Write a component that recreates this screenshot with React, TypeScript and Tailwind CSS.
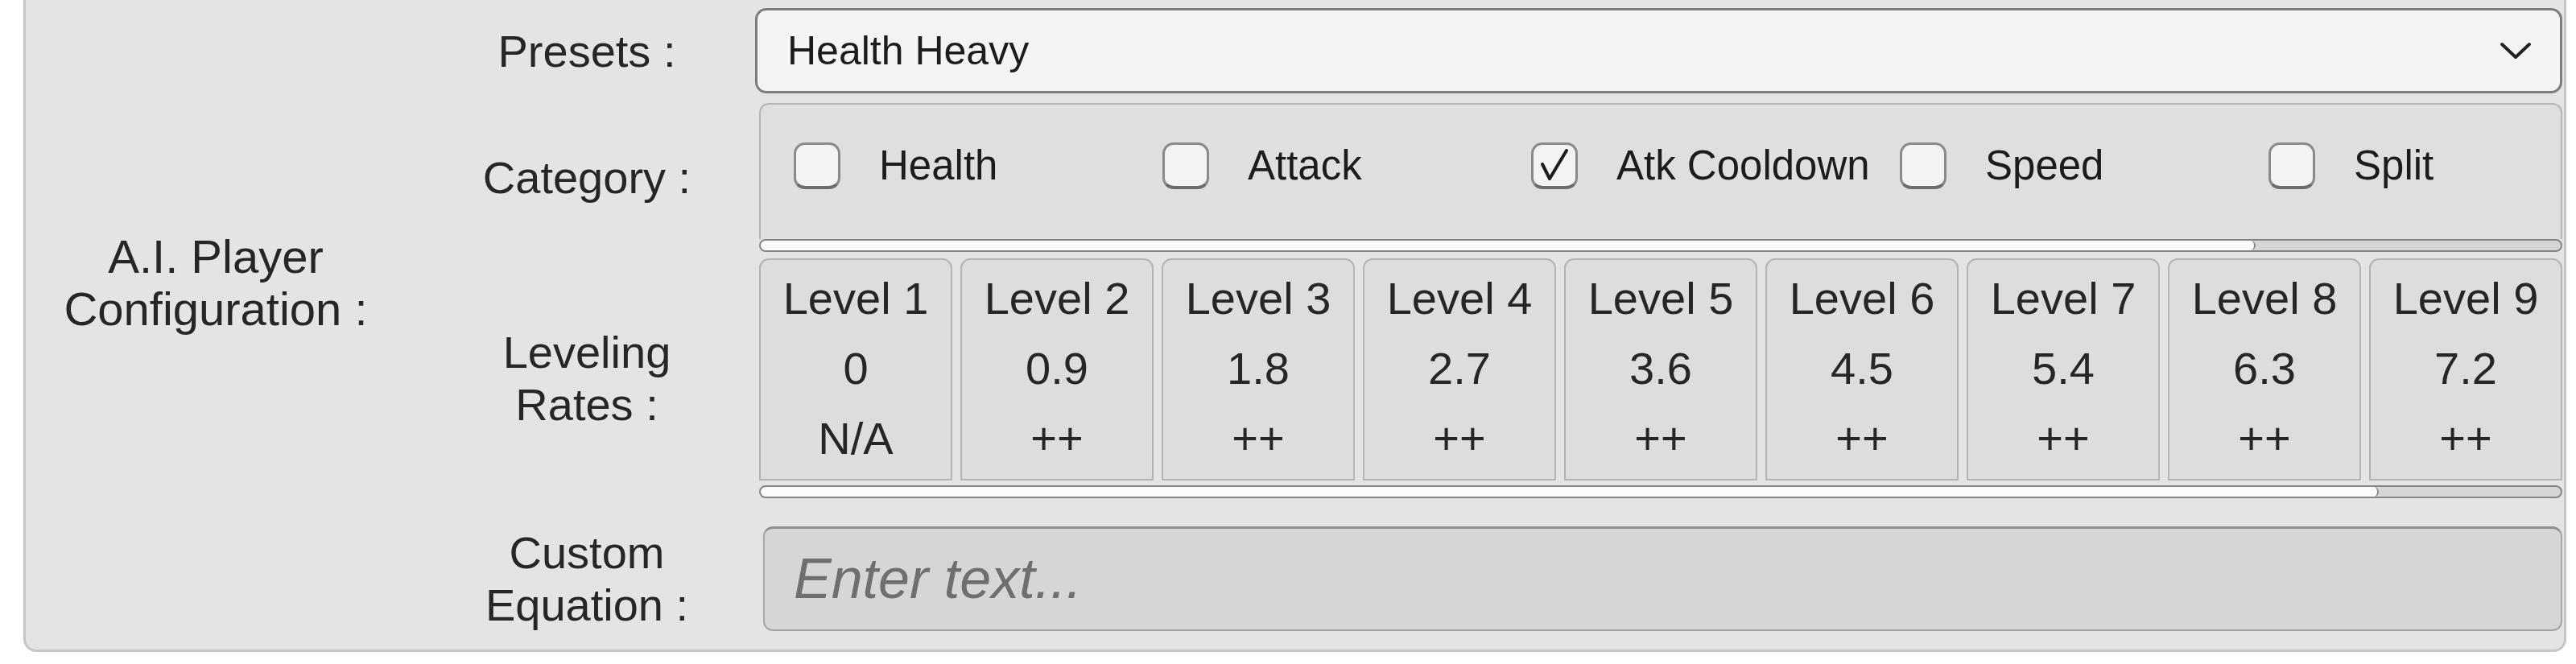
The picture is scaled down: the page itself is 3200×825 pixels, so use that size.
const categories = [
  { name: 'Health', checked: false },
  { name: 'Attack', checked: false },
  { name: 'Atk Cooldown', checked: true },
  { name: 'Speed', checked: false },
  { name: 'Split', checked: false },
];

const levels = [
  { name: 'Level 1', rate: '0', mark: 'N/A' },
  { name: 'Level 2', rate: '0.9', mark: '++' },
  { name: 'Level 3', rate: '1.8', mark: '++' },
  { name: 'Level 4', rate: '2.7', mark: '++' },
  { name: 'Level 5', rate: '3.6', mark: '++' },
  { name: 'Level 6', rate: '4.5', mark: '++' },
  { name: 'Level 7', rate: '5.4', mark: '++' },
  { name: 'Level 8', rate: '6.3', mark: '++' },
  { name: 'Level 9', rate: '7.2', mark: '++' },
];

const Checkbox = ({ checked }: { checked: boolean }) => (
  <div className="w-[58px] h-[58px] shrink-0 rounded-[14px] border-[3px] border-[#8a8a8a] border-b-[4px] border-b-[#6c6c6c] bg-[#f3f3f3] flex items-center justify-center">
    {checked && (
      <svg width="44" height="44" viewBox="0 0 44 44" fill="none">
        <path d="M7 20 L16 38 L37 3" stroke="#1c1c1c" strokeWidth="4" strokeLinecap="round" strokeLinejoin="round" />
      </svg>
    )}
  </div>
);

const Scrollbar = ({ thumb }: { thumb: string }) => (
  <div className="h-[16px] rounded-full border-2 border-[#858585] bg-[#d6d6d6] flex overflow-hidden">
    <div className={`h-full rounded-full bg-[#fbfbfb] border-r-2 border-[#858585] ${thumb}`} />
  </div>
);

const Label = ({ children }: { children: React.ReactNode }) => (
  <div className="w-[418px] shrink-0 text-center text-[56px] leading-[65px] text-[#262626]">{children}</div>
);

export default function App() {
  return (
    <div className="w-[3200px] h-[825px] bg-white [font-family:'Liberation_Sans',Arial,sans-serif]">
      <div className="ml-[29px] mr-[12px] h-[810px] bg-[#e4e4e4] border-x-[3px] border-b-[3px] border-[#c6c6c6] rounded-b-[16px] flex">
        <div className="w-[488px] shrink-0 pr-[16px] pt-[286px] text-center text-[58px] leading-[65px] text-[#262626]">
          A.I. Player
          <br />
          Configuration :
        </div>

        <div className="flex-1 min-w-0 flex flex-col pt-[10px] pr-[2px]">
          <div className="flex items-center">
            <Label>Presets :</Label>
            <div className="flex-1 min-w-0 h-[106px] rounded-[14px] border-[3px] border-[#7d7d7d] bg-[#f4f4f4] flex items-center justify-between pl-[37px] pr-[35px]">
              <span className="text-[50px] text-[#1c1c1c]">Health Heavy</span>
              <svg width="40" height="24" viewBox="0 0 40 24" fill="none">
                <path d="M3 4 L20 20 L37 4" stroke="#222" strokeWidth="4" strokeLinecap="round" strokeLinejoin="round" />
              </svg>
            </div>
          </div>

          <div className="flex items-center mt-[12px]">
            <Label>Category :</Label>
            <div className="flex-1 min-w-0 ml-[5px] flex flex-col">
              <div className="h-[169px] rounded-t-[12px] border-2 border-b-0 border-[#b6b6b6] bg-[#dfdfdf] overflow-hidden flex items-start pt-[47px] pl-[41px]">
                {categories.map((c) => (
                  <div key={c.name} className="w-[458px] h-[58px] shrink-0 flex items-center">
                    <Checkbox checked={c.checked} />
                    <span className="ml-[48px] text-[51px] text-[#1c1c1c] whitespace-nowrap">{c.name}</span>
                  </div>
                ))}
              </div>
              <Scrollbar thumb="w-[1857px]" />
            </div>
          </div>

          <div className="flex items-center mt-[8px]">
            <Label>
              Leveling
              <br />
              Rates :
            </Label>
            <div className="flex-1 min-w-0 ml-[5px] flex flex-col">
              <div className="h-[276px] flex gap-[10px] overflow-hidden">
                {levels.map((l) => (
                  <div key={l.name} className="w-[240px] shrink-0 h-full rounded-t-[12px] border-2 border-[#b4b4b4] bg-[#dddddd] flex flex-col items-center pt-[4px] text-[56px] text-[#262626]">
                    <div className="h-[87px] flex items-center">{l.name}</div>
                    <div className="h-[87px] flex items-center">{l.rate}</div>
                    <div className="h-[87px] flex items-center">{l.mark}</div>
                  </div>
                ))}
              </div>
              <div className="mt-[6px]">
                <Scrollbar thumb="w-[2010px]" />
              </div>
            </div>
          </div>

          <div className="flex items-center mt-[35px]">
            <Label>
              Custom
              <br />
              Equation :
            </Label>
            <div className="flex-1 min-w-0 ml-[10px] h-[130px] rounded-[12px] border-2 border-t-[3px] border-[#a6a6a6] border-t-[#8f8f8f] bg-[#d6d6d6] flex items-center pl-[36px]">
              <span className="italic text-[70px] text-[#6f6f6f]">Enter text...</span>
            </div>
          </div>
        </div>
      </div>
    </div>
  );
}
